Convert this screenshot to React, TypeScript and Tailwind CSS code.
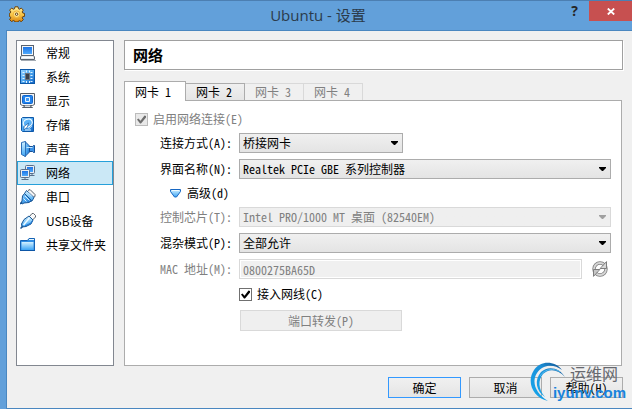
import { useState } from "react";
import type { ReactNode } from "react";

const GearIcon = () => (
  <svg viewBox="0 0 16 16" className="size-4" aria-hidden="true">
    <defs>
      <linearGradient id="gold" x1="0" y1="0" x2="0" y2="1">
        <stop offset="0" stopColor="#fff3a8" />
        <stop offset="0.5" stopColor="#f9c648" />
        <stop offset="1" stopColor="#d98612" />
      </linearGradient>
    </defs>
    <path
      d="M6 .8h3l.5 2 1 .4 1.8-1.1 2 2-1.1 1.8.4 1 2 .6v2.8l-2 .5-.4 1.1 1.1 1.7-2 2.1-1.8-1.1-1 .4-.5 1H6l-.5-1.1-1.1-.4-1.8 1.1-2-2 1.1-1.8-.4-1-1-.5V7.5l1.1-.6.4-1L.6 4.1l2-2 1.8 1.1 1.1-.4z"
      fill="url(#gold)"
      stroke="#6b3f08"
      strokeLinejoin="round"
    />
    <circle cx="7.6" cy="8.2" r="3.3" fill="#ffe68a" stroke="#f0b23a" />
    <circle cx="7.6" cy="8.2" r="1.2" fill="#fff" stroke="#5f3a0a" />
  </svg>
);

// shared gradients for the sidebar icons
const IconDefs = () => (
  <svg className="absolute size-0" aria-hidden="true">
    <defs>
      <linearGradient id="blue" x1="0" y1="0" x2="1" y2="1">
        <stop offset="0" stopColor="#9bd6ff" />
        <stop offset="0.5" stopColor="#4ba5ef" />
        <stop offset="1" stopColor="#0f62c4" />
      </linearGradient>
      <linearGradient id="screen" x1="0" y1="0" x2="0" y2="1">
        <stop offset="0" stopColor="#1d74e6" />
        <stop offset="1" stopColor="#4fa9fb" />
      </linearGradient>
      <linearGradient id="sky" x1="0" y1="0" x2="0" y2="1">
        <stop offset="0" stopColor="#d4f1ff" />
        <stop offset="1" stopColor="#3ba4f4" />
      </linearGradient>
    </defs>
  </svg>
);

const Icon = ({ children }: { children: ReactNode }) => (
  <svg viewBox="0 0 16 16" className="size-4 shrink-0" aria-hidden="true">
    {children}
  </svg>
);

const GeneralIcon = () => (
  <Icon>
    <rect x="1.5" y=".5" width="12" height="10" fill="#f4f6f8" stroke="#59626e" />
    <rect x="3" y="2" width="9" height="7" fill="url(#screen)" />
    <path d="M1.5 10.5.5 12v2.5h14V12l-1-1.5z" fill="#e6e9ec" stroke="#59626e" />
    <path d="M2 12.5h11" stroke="#fff" />
    <path d="M1 15.5h15" stroke="#a4abb3" />
  </Icon>
);

const SystemIcon = () => (
  <Icon>
    <rect x=".5" y=".5" width="14" height="14" fill="url(#blue)" stroke="#0d58a8" />
    <path d="M2.5 3.5h2M2.5 6.5h2M2.5 9.5h2M2.5 12.5h2M10.5 3.5h2M10.5 6.5h2M10.5 9.5h2M10.5 12.5h2M6.5 1.5v2M9.5 1.5v2M6.5 12v2M9.5 12v2" stroke="#dff3ff" />
    <rect x="5.5" y="4.5" width="4" height="6" fill="#39414b" stroke="#69747f" />
  </Icon>
);

const DisplayIcon = () => (
  <Icon>
    <path d="M.5.5h14v11l-2 1h-10l-2-1z" fill="#f4f5f6" stroke="#565e68" />
    <rect x="2.5" y="2.5" width="10" height="8" rx="1" fill="#2182ed" stroke="#1166cc" />
    <path d="M5.5 4.5h4v4h-4z" fill="#3d97f5" stroke="#e4f4ff" />
    <path d="M4.5 12.5v1l-2 1h10l-2-1v-1" fill="#d8dcdf" stroke="#565e68" />
  </Icon>
);

const StorageIcon = () => (
  <Icon>
    <path d="M1.5 1.5l1-1h11v14h-11l-1-1z" fill="url(#blue)" stroke="#0d58a8" />
    <ellipse cx="7.8" cy="6" rx="4.6" ry="3.8" fill="#5cb2f7" stroke="#f2fbff" strokeWidth="1.2" transform="rotate(-25 7.8 6)" />
    <path d="M4 13V9.5L8.5 6l-1 4z" fill="#fff" stroke="#0d58a8" strokeWidth=".7" />
    <path d="M8 10.5c2 2 3-1 4-1.500M5 13h6" stroke="#dff3ff" fill="none" />
  </Icon>
);

const AudioIcon = () => (
  <Icon>
    <path d="M5 .5 9.5 5v6L5 15.500z" fill="url(#blue)" stroke="#1f5da6" strokeLinejoin="round" />
    <path d="M1.5 1.5 5.5.5v15l-4-2z" fill="url(#sky)" stroke="#2c6fb8" strokeLinejoin="round" />
    <path d="M9.5 5.5h3l1-1h1v7h-1l-1-1h-3z" fill="#3d93e8" stroke="#174f93" />
    <path d="M6.500 6.500h6" stroke="#bfe6ff" />
  </Icon>
);

const NetworkIcon = () => (
  <Icon>
    <rect x="5.5" y=".5" width="9" height="8" rx="1" fill="#e8edf3" stroke="#5a6f8b" />
    <rect x="7" y="2" width="6" height="5" fill="url(#screen)" />
    <path d="M9.5 10.5h5M12 8.5v2" stroke="#5a6f8b" />
    <rect x=".5" y="4.5" width="9" height="8" rx="1" fill="#e8edf3" stroke="#5a6f8b" />
    <rect x="2" y="6" width="6" height="5" fill="url(#screen)" />
    <path d="M5 12.5v2M1.5 14.5h7" stroke="#5a6f8b" />
  </Icon>
);

const SerialIcon = () => (
  <Icon>
    <path d="M8 1.5 10 .5l5 5v2l-2 1" fill="#f5f5f5" stroke="#59616a" />
    <path d="m6.5 1.5 7.5 7-2 3.5-2 .5-5-5-.5-3z" fill="url(#sky)" stroke="#1b5795" />
    <path d="m4.5 4.5 7 7-2.5 2-5 .5-2 1-1-1 1-2 .5-5z" fill="url(#blue)" stroke="#1b5795" />
    <path d="m5 7 4.5 4.5M8 3.5l4 4M3.5 9.5l3 3" stroke="#d7f1ff" />
    <path d="m0 15 2-2" stroke="#1b5795" strokeWidth="1.5" />
  </Icon>
);

const UsbIcon = () => (
  <Icon>
    <path d="M9.5 3.5 12 .5h1.5l2 2V4l-3 3z" fill="#fafafa" stroke="#5c646d" />
    <path d="m9 3 4 4-2 4-5 2.5-4 .5-.5-3L4 6.5z" fill="url(#sky)" stroke="#1b5795" strokeLinejoin="round" />
    <path d="m3.5 12 6-7" stroke="#effaff" strokeWidth="1.5" />
    <path d="m5 13 6-3 1.5-2.5" stroke="#1a72d0" fill="none" />
    <path d="M.5 15.5 3 13" stroke="#1b5795" strokeWidth="1.5" />
  </Icon>
);

const FolderIcon = () => (
  <Icon>
    <path d="M.5 13.5v-10h7l1.5-2h5.5v12z" fill="#2f8de4" stroke="#1563b5" />
    <path d="M1.5 5h12v8h-12z" fill="url(#sky)" />
    <path d="M9 2.5h5" stroke="#e4f6ff" />
    <path d="M0 13.5h15" stroke="#0d56a6" />
  </Icon>
);

const RefreshIcon = () => (
  <svg viewBox="0 0 16 16" className="size-4" fill="none" strokeLinecap="round" aria-hidden="true">
    <circle cx="8" cy="8" r="6" stroke="#7d7d7d" strokeWidth="3.4" />
    <circle cx="8" cy="8" r="6" stroke="#d6d6d6" strokeWidth="1.8" />
    <path d="M14.500 1v6.500H8.500z" fill="#d8d8d8" stroke="#7d7d7d" strokeLinejoin="round" />
    <path d="M1.500 15V8.500h6z" fill="#c6c6c6" stroke="#7d7d7d" strokeLinejoin="round" />
  </svg>
);

const sections = [
  { name: "常规", icon: <GeneralIcon /> },
  { name: "系统", icon: <SystemIcon /> },
  { name: "显示", icon: <DisplayIcon /> },
  { name: "存储", icon: <StorageIcon /> },
  { name: "声音", icon: <AudioIcon /> },
  { name: "网络", icon: <NetworkIcon /> },
  { name: "串口", icon: <SerialIcon /> },
  { name: "USB设备", icon: <UsbIcon /> },
  { name: "共享文件夹", icon: <FolderIcon /> },
];

const tabs = [
  { name: "网卡 1", disabled: false },
  { name: "网卡 2", disabled: false },
  { name: "网卡 3", disabled: true },
  { name: "网卡 4", disabled: true },
];

const Label = ({ id, disabled, children }: { id: string; disabled?: boolean; children: ReactNode }) => (
  <label htmlFor={id} className={disabled ? "text-right text-[#808080]" : "text-right text-black"}>
    {children}
  </label>
);

const Select = ({ id, value, disabled, narrow }: { id: string; value: string; disabled?: boolean; narrow?: boolean }) => (
  <div className={narrow ? "relative w-41" : "relative w-full"}>
    <select
      id={id}
      disabled={disabled}
      className="block h-5 w-full appearance-none border border-[#acacac] bg-linear-to-b from-[#f0f0f0] to-[#e4e4e4] pr-5 pl-[3px] text-black disabled:border-[#d9d9d9] disabled:from-[#efefef] disabled:to-[#efefef] disabled:text-[#808080] disabled:opacity-100"
    >
      <option>{value}</option>
    </select>
    <svg viewBox="0 0 7 4" className="pointer-events-none absolute top-2 right-[5px] h-1 w-[7px]" aria-hidden="true">
      <path d="M0 0h7v1L4 4H3L0 1z" fill={disabled ? "#a0a0a0" : "#000"} />
    </svg>
  </div>
);

const CheckBox = ({ label, disabled }: { label: string; disabled?: boolean }) => {
  const [checked, setChecked] = useState(true);

  return (
    <label className={disabled ? "flex h-4 items-center gap-[5px] text-[#808080]" : "flex h-4 items-center gap-[5px] text-black"}>
      <span className="relative size-[13px]">
        <input
          type="checkbox"
          checked={checked}
          disabled={disabled}
          onChange={(e) => setChecked(e.target.checked)}
          className="block size-[13px] appearance-none border border-[#707070] bg-white disabled:border-[#bcbcbc] disabled:bg-[#e9e9e9]"
        />
        {checked && (
          <svg viewBox="0 0 13 13" className="pointer-events-none absolute inset-0" aria-hidden="true">
            <path d="m2 6.5 1.5-1 2 2.2L9.5 2.5l1.5.5v1.5l-5 6H5z" fill={disabled ? "#6e6e6e" : "#000"} />
          </svg>
        )}
      </span>
      {label}
    </label>
  );
};

const Watermark = () => (
  <div className="pointer-events-none absolute right-1 bottom-1.5 flex h-[42px] w-[100px] justify-end pr-0.5">
    <svg viewBox="0 0 40 42" className="absolute top-0 left-0 h-[42px] w-10" aria-hidden="true">
      <defs>
        <linearGradient id="swirl" x1="1" y1="0" x2="0" y2="1">
          <stop offset="0" stopColor="#12508f" />
          <stop offset="0.4" stopColor="#1b90d8" />
          <stop offset="1" stopColor="#13a8ee" />
        </linearGradient>
      </defs>
      <path d="M34 9C27 0 13-1 6 9-2 21 5 37 20 40 8 33 3 21 9 12 15 3 26 3 34 9z" fill="url(#swirl)" />
      <path d="M37 16C32 7 20 4 13 11 6 19 8 30 17 36 10 28 10 19 15 13 21 7 30 8 37 16z" fill="url(#swirl)" />
      <path d="M12 15C17 7 27 7 32 11" fill="none" stroke="#5fc3f2" strokeWidth=".8" />
    </svg>
    <div className="relative text-right">
      <div className="pt-1 pr-2 font-['Noto_Sans_CJK_SC',sans-serif] text-[16px] leading-4 text-[#66686e]">运维网</div>
      <div className="pt-1 font-['Liberation_Sans',sans-serif] text-[15px] leading-4 font-bold text-[#1883dc]">iyunv.com</div>
    </div>
  </div>
);

const App = () => {
  const [section, setSection] = useState("网络");
  const [tab, setTab] = useState("网卡 1");

  return (
    <div className="relative flex min-h-screen flex-col bg-[#62a0da] font-['Noto_Sans_CJK_SC',sans-serif] text-[12px] leading-4 text-black">
      <IconDefs />
      <header className="flex h-[30px] border-t border-[#4c7fb2]">
        <div className="w-18 pt-[5px] pl-[9px]">
          <GearIcon />
        </div>
        <h1 className="flex-1 pt-1 text-center font-['Open_Sans','Noto_Sans_CJK_SC',sans-serif] text-[15px] leading-5 text-[#2b3b4b]">
          Ubuntu - 设置
        </h1>
        <div className="flex w-17 items-start justify-end">
          <button
            aria-label="帮助"
            className="h-5 w-[25px] pr-1 text-center font-['Open_Sans',sans-serif] text-[14px] leading-5 font-bold text-[#262626]"
          >
            ?
          </button>
          <button aria-label="关闭" className="flex h-5 w-[43px] items-center justify-center bg-[#c75050]">
            <svg viewBox="0 0 8 7" className="h-[7px] w-2" aria-hidden="true">
              <path d="m.8.5 6.4 6M7.2.5l-6.4 6" stroke="#fff" strokeWidth="1.8" />
            </svg>
          </button>
        </div>
      </header>

      <main className="ml-1.5 flex flex-1 flex-col border-y border-l border-[#4a87c0] bg-[#f0f0f0] px-[9px] pt-[9px] pb-2.5">
        <div className="flex flex-1 gap-2.5">
          <nav className="w-[98px] shrink-0 border border-[#828790] bg-white">
            {sections.map((item) => (
              <button
                key={item.name}
                onClick={() => setSection(item.name)}
                className={
                  item.name === section
                    ? "flex h-6 w-full items-center gap-2.5 border border-[#26a0da] bg-[#cbe8f6] pl-0.5 text-left whitespace-nowrap"
                    : "flex h-6 w-full items-center gap-2.5 border border-transparent pl-0.5 text-left whitespace-nowrap"
                }
              >
                {item.icon}
                {item.name}
              </button>
            ))}
          </nav>

          <section className="flex min-w-0 flex-1 flex-col font-['Noto_Sans_CJK_SC',monospace] [font-feature-settings:'hwid']">
            <h2 className="h-[30px] border border-[#a0a0a0] bg-white pl-2 text-[15px] leading-7 font-bold shadow-[1px_1px_0_#fff]">{section}</h2>

            <div role="tablist" className="mt-[11px] flex h-5 items-end">
              {tabs.map((item) => (
                <button
                  key={item.name}
                  role="tab"
                  aria-selected={item.name === tab}
                  disabled={item.disabled}
                  onClick={() => setTab(item.name)}
                  className={
                    item.name === tab
                      ? "relative z-10 h-5 w-[62px] border border-b-0 border-[#acacac] bg-white pr-1"
                      : "h-[18px] w-[59px] border border-l-0 border-[#acacac] bg-linear-to-b from-[#f0f0f0] to-[#e5e5e5] pr-0.5 disabled:border-t-[#d9d9d9] disabled:border-r-[#d9d9d9] disabled:from-[#f0f0f0] disabled:to-[#f0f0f0] disabled:text-[#808080]"
                  }
                >
                  {item.name}
                </button>
              ))}
            </div>

            <div role="tabpanel" className="-mt-px mr-px flex-1 border border-[#acacac] bg-white p-2.5">
              <CheckBox label="启用网络连接(E)" disabled />
              <div className="mt-1.5 grid grid-cols-[97px_minmax(0,1fr)] items-center gap-x-[7px] gap-y-1.5">
                <Label id="attached">连接方式(A):</Label>
                <Select id="attached" value="桥接网卡" narrow />

                <Label id="iface">界面名称(N):</Label>
                <Select id="iface" value="Realtek PCIe GBE 系列控制器" />

                <button className="col-span-2 flex h-4 items-center gap-1.5 pl-[35px]">
                  <svg viewBox="0 0 11 9" className="h-[9px] w-[11px]" aria-hidden="true">
                    <path d="M.5.5h10v2l-4 5.5h-2l-4-5.5z" fill="url(#sky)" stroke="#1767c2" />
                    <path d="M2 1.5h7" stroke="#effaff" />
                  </svg>
                  高级(d)
                </button>

                <Label id="chip" disabled>控制芯片(T):</Label>
                <Select id="chip" value="Intel PRO/1000 MT 桌面 (82540EM)" disabled />

                <Label id="promisc">混杂模式(P):</Label>
                <Select id="promisc" value="全部允许" />

                <Label id="mac" disabled>MAC 地址(M):</Label>
                <div className="flex items-center gap-2.5 pr-[3px]">
                  <input
                    id="mac"
                    disabled
                    defaultValue="0800275BA65D"
                    className="h-5 min-w-0 flex-1 border border-[#d9d9d9] bg-[#f0f0f0] pl-[3px] text-[#808080] shadow-[inset_0_0_0_1px_#fff]"
                  />
                  <button disabled aria-label="刷新">
                    <RefreshIcon />
                  </button>
                </div>

                <div className="col-start-2 pt-px">
                  <CheckBox label="接入网线(C)" />
                </div>
                <button disabled className="col-start-2 mt-0.5 ml-px h-[21px] w-[162px] border border-[#d9d9d9] bg-[#efefef] text-[#808080]">
                  端口转发(P)
                </button>
              </div>
            </div>
          </section>
        </div>

        <footer className="mt-[11px] flex justify-end gap-2 [font-feature-settings:'hwid']">
          <button className="h-[21px] w-[73px] border border-[#3399ff] bg-linear-to-b from-[#f0f0f0] to-[#e5e5e5]">确定</button>
          <button className="h-[21px] w-[73px] border border-[#acacac] bg-linear-to-b from-[#f0f0f0] to-[#e5e5e5]">取消</button>
          <button className="h-[21px] w-[73px] border border-[#acacac] bg-linear-to-b from-[#f0f0f0] to-[#e5e5e5]">帮助(H)</button>
        </footer>
      </main>
      <Watermark />
    </div>
  );
};

export default App;
